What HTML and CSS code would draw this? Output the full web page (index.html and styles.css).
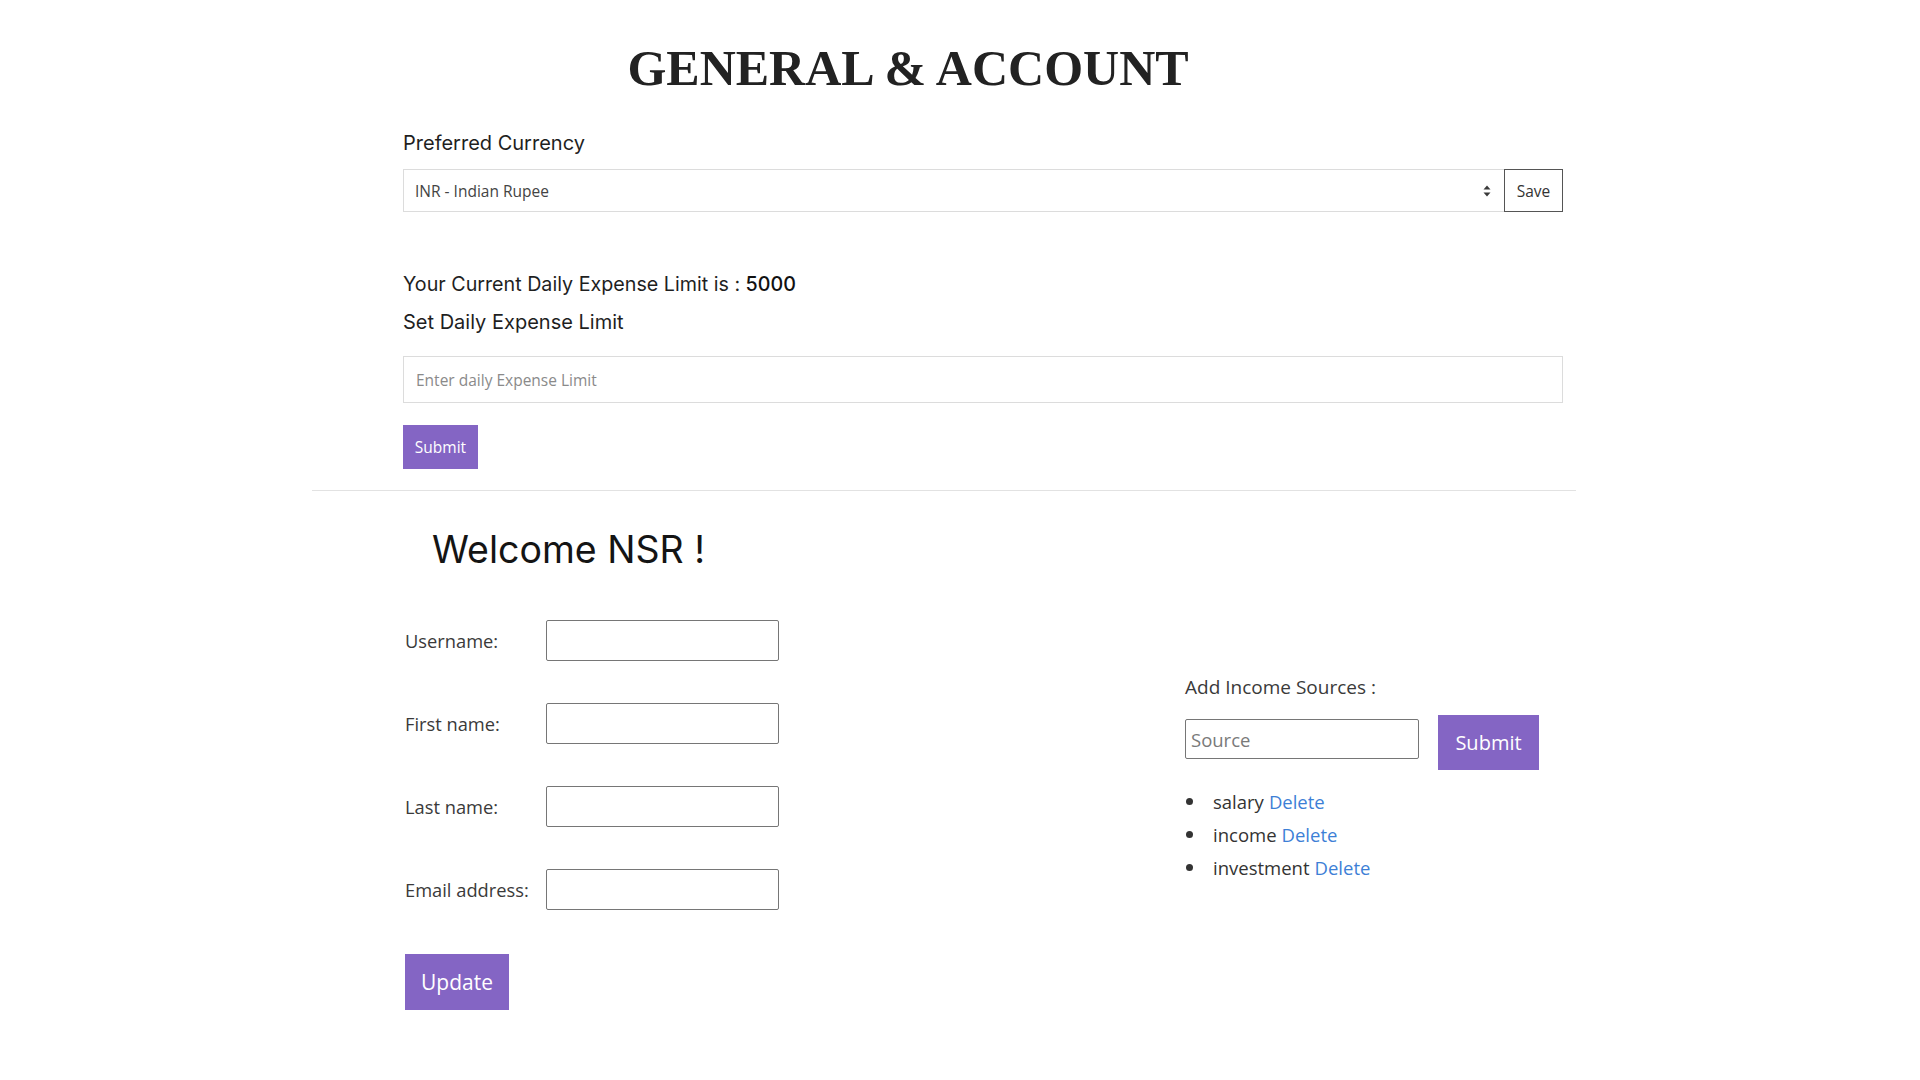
FILE: index.html
```html
<!DOCTYPE html>
<html lang="en">
<head>
<meta charset="utf-8">
<title>General &amp; Account</title>
<link rel="stylesheet" href="styles.css">
</head>
<body>
<div class="page">
  <h1 class="title">GENERAL &amp; ACCOUNT</h1>

  <section class="settings">
    <label class="field-label" for="currency">Preferred Currency</label>
    <div class="currency-row">
      <div class="select-wrap">
        <select id="currency" class="select">
          <option>INR - Indian Rupee</option>
        </select>
        <svg class="select-arrows" width="8" height="12" viewBox="0 0 8 12" aria-hidden="true">
          <path d="M4 0.5 L7.5 4.5 H0.5 Z M0.5 7.5 H7.5 L4 11.5 Z" fill="#3a3a3a"/>
        </svg>
      </div>
      <button class="btn-save" type="button">Save</button>
    </div>

    <p class="limit-current">Your Current Daily Expense Limit is : <strong>5000</strong></p>
    <p class="limit-set">Set Daily Expense Limit</p>
    <input class="limit-input" type="text" placeholder="Enter daily Expense Limit">
    <button class="btn btn-small" type="button">Submit</button>
  </section>

  <hr class="divider">

  <section class="account">
    <div class="profile">
      <h2 class="welcome">Welcome NSR !</h2>
      <div class="form-row first"><label class="row-label">Username:</label><input class="text-input" type="text"></div>
      <div class="form-row"><label class="row-label">First name:</label><input class="text-input" type="text"></div>
      <div class="form-row"><label class="row-label">Last name:</label><input class="text-input" type="text"></div>
      <div class="form-row"><label class="row-label">Email address:</label><input class="text-input" type="text"></div>
      <button class="btn btn-large" type="button">Update</button>
    </div>

    <div class="income">
      <p class="income-title">Add Income Sources :</p>
      <div class="income-row">
        <input class="text-input source" type="text" placeholder="Source">
        <button class="btn btn-income" type="button">Submit</button>
      </div>
      <ul class="income-list">
        <li><span>salary</span><a href="#">Delete</a></li>
        <li><span>income</span><a href="#">Delete</a></li>
        <li><span>investment</span><a href="#">Delete</a></li>
      </ul>
    </div>
  </section>
</div>
</body>
</html>
```
FILE: styles.css
```css
* {
  box-sizing: border-box;
}

body {
  margin: 0;
  background: #ffffff;
  color: #212121;
  font-family: "Open Sans", "Liberation Sans", sans-serif;
}

.page {
  width: 1264px;
  margin-left: 312px;
  padding-bottom: 40px;
}

.title {
  margin: 0;
  padding-top: 40px;
  width: 1192px;
  text-align: center;
  font-family: "Liberation Serif", "Times New Roman", serif;
  font-weight: 700;
  font-size: 50px;
  line-height: 56px;
  color: #222222;
}

/* ---------- settings ---------- */
.settings {
  padding-left: 91px;
  display: flex;
  flex-direction: column;
  align-items: flex-start;
}

.field-label,
.limit-current,
.limit-set {
  display: block;
  font-family: Inter, "Noto Sans", sans-serif;
  font-size: 20px;
  line-height: 24px;
  color: #1f1f1f;
}

.field-label {
  margin-top: 35px;
}

.currency-row {
  display: flex;
  margin-top: 14px;
  width: 1160px;
  height: 43px;
}

.select-wrap {
  position: relative;
  width: 1101px;
  height: 43px;
}

.select {
  appearance: none;
  -webkit-appearance: none;
  width: 100%;
  height: 43px;
  margin: 0;
  border: 1px solid #dcdcdc;
  border-right: none;
  border-radius: 0;
  background: #ffffff;
  padding: 0 30px 0 11px;
  font-family: "Open Sans", sans-serif;
  font-size: 15.5px;
  color: #444444;
}

.select-arrows {
  position: absolute;
  right: 13px;
  top: 16px;
  pointer-events: none;
}

.btn-save {
  width: 59px;
  height: 43px;
  margin: 0;
  padding: 0;
  border: 1px solid #555555;
  border-radius: 0;
  background: #ffffff;
  font-family: "Open Sans", sans-serif;
  font-size: 15.5px;
  color: #333333;
}

.limit-current {
  margin: 60px 0 0;
  font-size: 19.7px;
}

.limit-current strong {
  font-weight: 500;
  color: #111111;
}

.limit-set {
  margin: 14px 0 0;
}

.limit-input {
  margin-top: 22px;
  width: 1160px;
  height: 47px;
  border: 1px solid #dcdcdc;
  border-radius: 0;
  padding: 0 12px;
  font-family: "Open Sans", sans-serif;
  font-size: 15.5px;
  color: #333333;
}

.limit-input::placeholder {
  color: #8a8a8a;
}

.btn {
  border: none;
  border-radius: 0;
  background: #8465c4;
  color: #ffffff;
  font-family: "Open Sans", sans-serif;
  padding: 0;
  cursor: pointer;
}

.btn-small {
  margin-top: 22px;
  width: 75px;
  height: 44px;
  font-size: 15.5px;
}

.divider {
  margin: 21px 0 0;
  border: 0;
  border-top: 1px solid #e2e2e2;
  width: 1264px;
  height: 0;
}

/* ---------- account ---------- */
.account {
  display: flex;
  align-items: flex-start;
}

.profile {
  width: 873px;
  padding-left: 93px;
  display: flex;
  flex-direction: column;
  align-items: flex-start;
}

.welcome {
  margin: 36px 0 0;
  padding-left: 27px;
  font-family: Inter, "Noto Sans", sans-serif;
  font-weight: 400;
  font-size: 37.5px;
  line-height: 46px;
  color: #141414;
}

.form-row {
  display: flex;
  align-items: center;
  height: 41px;
  margin-top: 42px;
}

.form-row.first {
  margin-top: 47px;
}

.row-label {
  width: 141px;
  font-size: 18.3px;
  color: #3a3a3a;
}

.text-input {
  width: 233px;
  height: 41px;
  margin: 0;
  border: 1px solid #767676;
  border-radius: 2px;
  background: #ffffff;
  padding: 0 5px;
  font-family: "Open Sans", sans-serif;
  font-size: 18px;
}

.btn-large {
  margin-top: 44px;
  width: 104px;
  height: 56px;
  font-size: 21px;
}

.income {
  margin-top: 183px;
}

.income-title {
  margin: 0;
  font-size: 19px;
  line-height: 26px;
  color: #3a3a3a;
}

.income-row {
  display: flex;
  align-items: flex-start;
  gap: 19px;
  margin-top: 15px;
}

.source {
  width: 234px;
  height: 40px;
  margin-top: 4px;
  font-size: 18.5px;
}

.source::placeholder {
  color: #7a7a7a;
}

.btn-income {
  width: 101px;
  height: 55px;
  font-size: 20px;
}

.income-list {
  list-style: none;
  margin: 15px 0 0;
  padding: 0;
  font-size: 18.5px;
  line-height: 33px;
  color: #333333;
}

.income-list li {
  display: flex;
  align-items: center;
}

.income-list li::before {
  content: "";
  width: 7px;
  height: 7px;
  border-radius: 50%;
  background: #333333;
  margin: 0 20px 0 1px;
}

.income-list a {
  margin-left: 5px;
  color: #3d7fd6;
  text-decoration: none;
}
```
